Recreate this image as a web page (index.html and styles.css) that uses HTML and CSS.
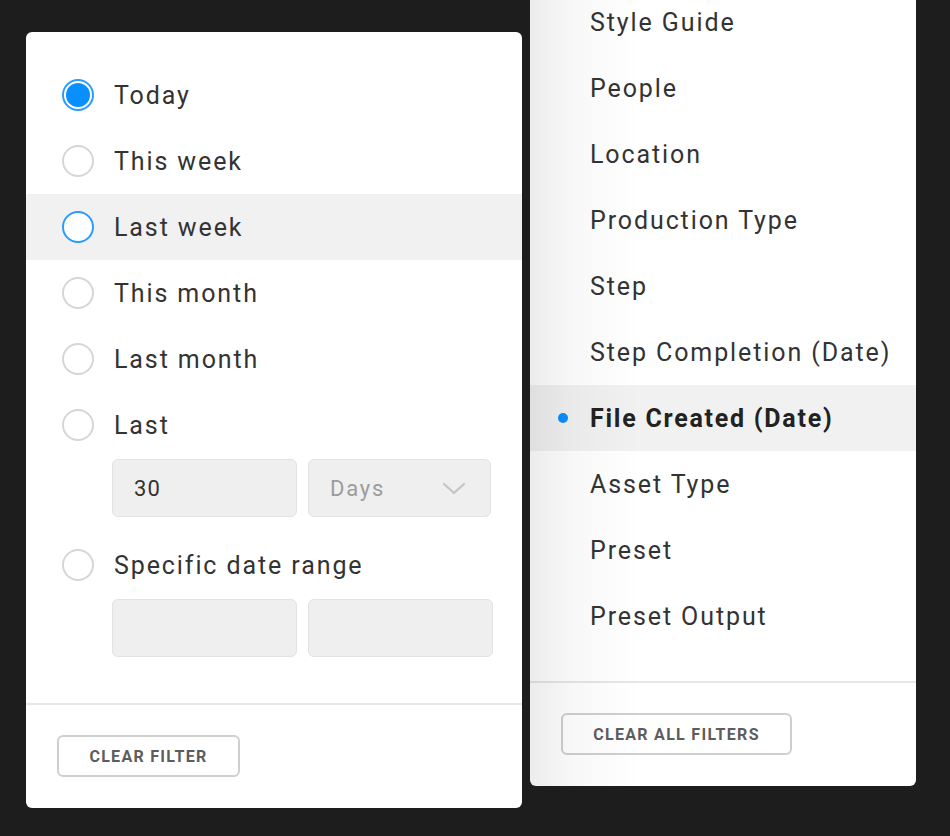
FILE: index.html
```html
<!DOCTYPE html>
<html>
<head>
<meta charset="utf-8">
<link rel="stylesheet" href="styles.css">
</head>
<body>
<div class="stage">
  <div class="panel date-panel">
    <div class="options">
      <div class="opt"><span class="radio checked"></span><span class="label">Today</span></div>
      <div class="opt"><span class="radio"></span><span class="label">This week</span></div>
      <div class="opt hover"><span class="radio focus"></span><span class="label">Last week</span></div>
      <div class="opt"><span class="radio"></span><span class="label">This month</span></div>
      <div class="opt"><span class="radio"></span><span class="label">Last month</span></div>
      <div class="opt"><span class="radio"></span><span class="label">Last</span></div>
      <div class="fields">
        <div class="field"><span class="value">30</span></div>
        <div class="field select"><span class="placeholder">Days</span>
          <svg class="chev" width="24" height="14" viewBox="0 0 24 14"><path d="M2 2 L12 11 L22 2" fill="none" stroke="#c4c4c4" stroke-width="2.2" stroke-linecap="round" stroke-linejoin="round"/></svg>
        </div>
      </div>
      <div class="opt spaced"><span class="radio"></span><span class="label">Specific date range</span></div>
      <div class="fields">
        <div class="field"></div>
        <div class="field"></div>
      </div>
    </div>
    <div class="footer"><button class="btn clear">CLEAR FILTER</button></div>
  </div>

  <div class="panel list-panel">
    <ul class="menu">
      <li>Style Guide</li>
      <li>People</li>
      <li>Location</li>
      <li>Production Type</li>
      <li>Step</li>
      <li>Step Completion (Date)</li>
      <li class="active"><span class="dot"></span>File Created (Date)</li>
      <li>Asset Type</li>
      <li>Preset</li>
      <li>Preset Output</li>
    </ul>
    <div class="footer"><button class="btn clear-all">CLEAR ALL FILTERS</button></div>
  </div>
</div>
</body>
</html>
```
FILE: styles.css
```css
* { box-sizing: border-box; }
html, body {
  margin: 0;
  padding: 0;
  background: #1d1d1d;
  width: 950px;
  height: 836px;
  overflow: hidden;
  font-family: Roboto, "Liberation Sans", sans-serif;
}
.stage {
  position: relative;
  width: 950px;
  height: 836px;
}
.panel {
  position: absolute;
  background: #fff;
  border-radius: 6px;
  display: flex;
  flex-direction: column;
}
.date-panel {
  left: 26px;
  top: 32px;
  width: 496px;
  height: 776px;
}
.list-panel {
  left: 530px;
  top: -20px;
  width: 386px;
  height: 806px;
  overflow: hidden;
}
.list-panel::after {
  content: "";
  position: absolute;
  left: 0;
  top: 0;
  bottom: 0;
  width: 110px;
  background: linear-gradient(to right, rgba(0,0,0,0.075), rgba(0,0,0,0.03) 40px, rgba(0,0,0,0));
  pointer-events: none;
}
.options {
  padding-top: 30px;
  flex: 1;
}
.opt {
  height: 66px;
  display: flex;
  align-items: center;
  padding-left: 36px;
}
.opt.hover { background: #f1f1f1; }
.opt.spaced { margin-top: 15px; }
.radio {
  width: 32px;
  height: 32px;
  border-radius: 50%;
  border: 2px solid #d6d6d6;
  background: #fff;
  flex: none;
  position: relative;
}
.radio.focus { border-color: #2a9bff; }
.radio.checked { border-color: #2a9bff; }
.radio.checked::after {
  content: "";
  position: absolute;
  left: 2px;
  top: 2px;
  width: 24px;
  height: 24px;
  border-radius: 50%;
  background: #0a8fff;
}
.label {
  margin-left: 20px;
  font-size: 25px;
  letter-spacing: 1.9px;
  color: #333;
}
.fields {
  display: flex;
  gap: 11px;
  padding-left: 86px;
  margin-top: 1px;
}
.field {
  width: 185px;
  height: 58px;
  background: #efefef;
  border: 1.5px solid #e2e2e2;
  border-radius: 6px;
  display: flex;
  align-items: center;
  padding-left: 21px;
  padding-right: 24px;
}
.field.select { width: 183px; justify-content: space-between; }
.value {
  font-size: 22px;
  letter-spacing: 1.2px;
  color: #333;
}
.placeholder {
  font-size: 22px;
  color: #9c9c9c;
  letter-spacing: 1.8px;
}
.chev { display: block; margin-top: 2px; }
.footer {
  border-top: 2px solid #e6e6e6;
  height: 105px;
  flex: none;
  padding-top: 30px;
}
.date-panel .footer { padding-left: 31px; }
.list-panel .footer { padding-left: 31px; }
.btn {
  height: 42px;
  border: 2px solid #cfcfcf;
  border-radius: 6px;
  background: #fff;
  font-family: Roboto, "Liberation Sans", sans-serif;
  font-weight: 700;
  font-size: 16px;
  color: #5d5d5d;
  letter-spacing: 1.3px;
  padding: 0;
}
.btn.clear { width: 183px; }
.btn.clear-all { width: 231px; background: transparent; }
.menu {
  list-style: none;
  margin: 0;
  padding: 9px 0 0;
  flex: 1;
}
.menu li {
  height: 66px;
  display: flex;
  align-items: center;
  padding-left: 60px;
  font-size: 25px;
  letter-spacing: 1.9px;
  color: #333;
  position: relative;
}
.menu li.active {
  background: #f1f1f1;
  font-weight: 700;
  color: #222;
  letter-spacing: 1.75px;
}
.dot {
  position: absolute;
  left: 28px;
  top: 28px;
  width: 10px;
  height: 10px;
  border-radius: 50%;
  background: #0a8fff;
}
```
